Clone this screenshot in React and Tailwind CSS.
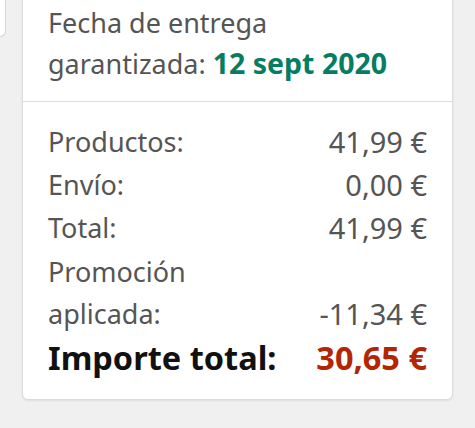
import React from 'react';

const rows = [
  { label: 'Productos:', value: '41,99 €' },
  { label: 'Envío:', value: '0,00 €' },
  { label: 'Total:', value: '41,99 €' },
];

export default function App() {
  return (
    <div className="w-[475px] h-[428px] overflow-hidden bg-[#f0f0f0] flex items-start" style={{ fontFamily: '"Noto Sans", "Liberation Sans", sans-serif' }}>
      <div className="w-[6px] h-[37px] shrink-0 bg-white border-r border-b border-[#d5d5d5] rounded-br-[6px]" />
      <div className="ml-[16px] w-[431px] -mt-[8px] bg-white border border-[#dcdcdc] rounded-[6px] shadow-[0_1px_2px_rgba(0,0,0,0.08)]">
        <div className="px-[25px] pt-[10px] pb-[17px] text-[27px] leading-[40px] text-[#555]">
          <div>Fecha de entrega</div>
          <div>
            garantizada: <span className="font-bold text-[28.5px] text-[#067d62]">12 sept 2020</span>
          </div>
        </div>
        <div className="border-t border-[#dcdcdc] px-[25px] pt-[18px] pb-[18px] text-[27px] leading-[43px] text-[#555]">
          {rows.map((r) => (
            <div key={r.label} className="flex justify-between">
              <span>{r.label}</span>
              <span className="text-[29px]">{r.value}</span>
            </div>
          ))}
          <div className="flex justify-between items-end mt-[2px] leading-[42px]">
            <span>Promoción<br />aplicada:</span>
            <span className="text-[29px]">-11,34 €</span>
          </div>
          <div className="flex justify-between items-baseline font-bold text-[32.5px] leading-[46px]">
            <span className="text-[#111]">Importe total:</span>
            <span className="text-[#b12704]">30,65 €</span>
          </div>
        </div>
      </div>
    </div>
  );
}
